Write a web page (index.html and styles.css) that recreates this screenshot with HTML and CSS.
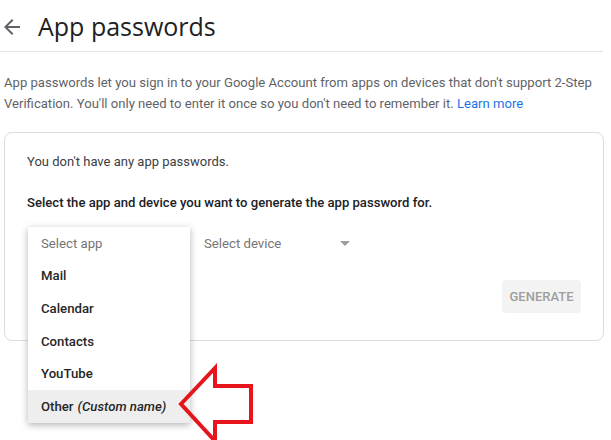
FILE: index.html
```html
<!DOCTYPE html>
<html>
<head>
<meta charset="utf-8">
<link rel="stylesheet" href="styles.css">
</head>
<body>
<header class="header">
  <svg class="back" width="24" height="24" viewBox="0 0 24 24"><path d="M20 11H7.83l5.59-5.59L12 4l-8 8 8 8 1.41-1.41L7.83 13H20v-2z" fill="#5f6368"/></svg>
  <h1 class="title">App passwords</h1>
</header>
<p class="intro">App passwords let you sign in to your Google Account from apps on devices that don't support 2-Step Verification. You'll only need to enter it once so you don't need to remember it. <a class="link" href="#">Learn more</a></p>
<section class="card">
  <p class="none">You don't have any app passwords.</p>
  <p class="instr">Select the app and device you want to generate the app password for.</p>
  <div class="selects">
    <div class="field app-field">
      <span class="ph">Select app</span>
      <ul class="menu">
        <li class="item ph">Select app</li>
        <li class="item">Mail</li>
        <li class="item">Calendar</li>
        <li class="item">Contacts</li>
        <li class="item">YouTube</li>
        <li class="item active">Other <i>(Custom name)</i></li>
      </ul>
    </div>
    <div class="field device-field">
      <span class="ph">Select device</span>
      <span class="caret"></span>
    </div>
  </div>
  <div class="actions">
    <button class="gen">GENERATE</button>
  </div>
</section>
<svg class="annot" width="611" height="440" viewBox="0 0 611 440">
  <polygon points="181,404 215,368 215,386 251,386 251,422 215,422 215,441" fill="none" stroke="#e8141c" stroke-width="4" stroke-linejoin="miter"/>
</svg>
</body>
</html>
```

FILE: styles.css
```css
html, body {
  margin: 0;
  padding: 0;
  background: #fff;
  width: 611px;
  height: 440px;
  overflow: hidden;
}
body {
  font-family: Roboto, "Liberation Sans", sans-serif;
  position: relative;
}
.header {
  display: flex;
  align-items: center;
  height: 51px;
  border-bottom: 1px solid #e3e3e3;
  margin-right: 8px;
}
.back {
  margin-top: 2px;
  width: 24px;
  height: 24px;
}
.title {
  margin: 0 0 0 14px;
  font-family: "Open Sans", Roboto, sans-serif;
  font-weight: 400;
  font-size: 25px;
  color: #202124;
}
.intro {
  margin: 20px 0 0 4px;
  font-size: 13.1px;
  line-height: 21px;
  color: #5f6368;
  width: 600px;
}
.link {
  color: #1a73e8;
  text-decoration: none;
}
.card {
  margin: 18px 7px 0 4px;
  border: 1px solid #dadce0;
  border-radius: 8px;
  padding: 19px 22px 27px 22px;
}
.none {
  margin: 0;
  font-size: 13px;
  line-height: 20px;
  color: #3c4043;
}
.instr {
  margin: 21px 0 0 0;
  font-size: 13.1px;
  line-height: 20px;
  font-weight: 500;
  color: #202124;
}
.selects {
  display: flex;
  margin-top: 14px;
  gap: 14px;
}
.field {
  position: relative;
  height: 32px;
  display: flex;
  align-items: center;
  font-size: 13.2px;
}
.app-field {
  width: 163px;
  padding-left: 14px;
  box-sizing: border-box;
}
.device-field {
  width: 152px;
  justify-content: space-between;
}
.ph {
  color: #757575;
}
.caret {
  width: 0;
  height: 0;
  border-left: 5px solid transparent;
  border-right: 5px solid transparent;
  border-top: 5px solid #9e9e9e;
  margin-right: 6px;
}
.menu {
  position: absolute;
  left: 1px;
  top: 0;
  width: 162px;
  margin: 0;
  padding: 0;
  list-style: none;
  background: #fff;
  box-shadow: 0 2px 7px rgba(0, 0, 0, 0.3);
  z-index: 2;
}
.item {
  height: 32.6px;
  display: flex;
  align-items: center;
  padding-left: 13px;
  font-size: 13.2px;
  font-weight: 500;
  color: #262626;
}
.item.ph {
  font-weight: 400;
  color: #757575;
}
.item.active {
  background: #eeeeee;
}
.item i {
  margin-left: 4px;
  font-style: italic;
}
.actions {
  display: flex;
  justify-content: flex-end;
  margin-top: 21px;
}
.gen {
  font-family: Roboto, sans-serif;
  font-size: 13px;
  font-weight: 500;
  color: #9e9e9e;
  background: #f3f3f3;
  border: none;
  border-radius: 4px;
  width: 79px;
  height: 33px;
  padding: 0;
}
.annot {
  position: absolute;
  left: 0;
  top: 0;
  pointer-events: none;
  z-index: 5;
}
```
